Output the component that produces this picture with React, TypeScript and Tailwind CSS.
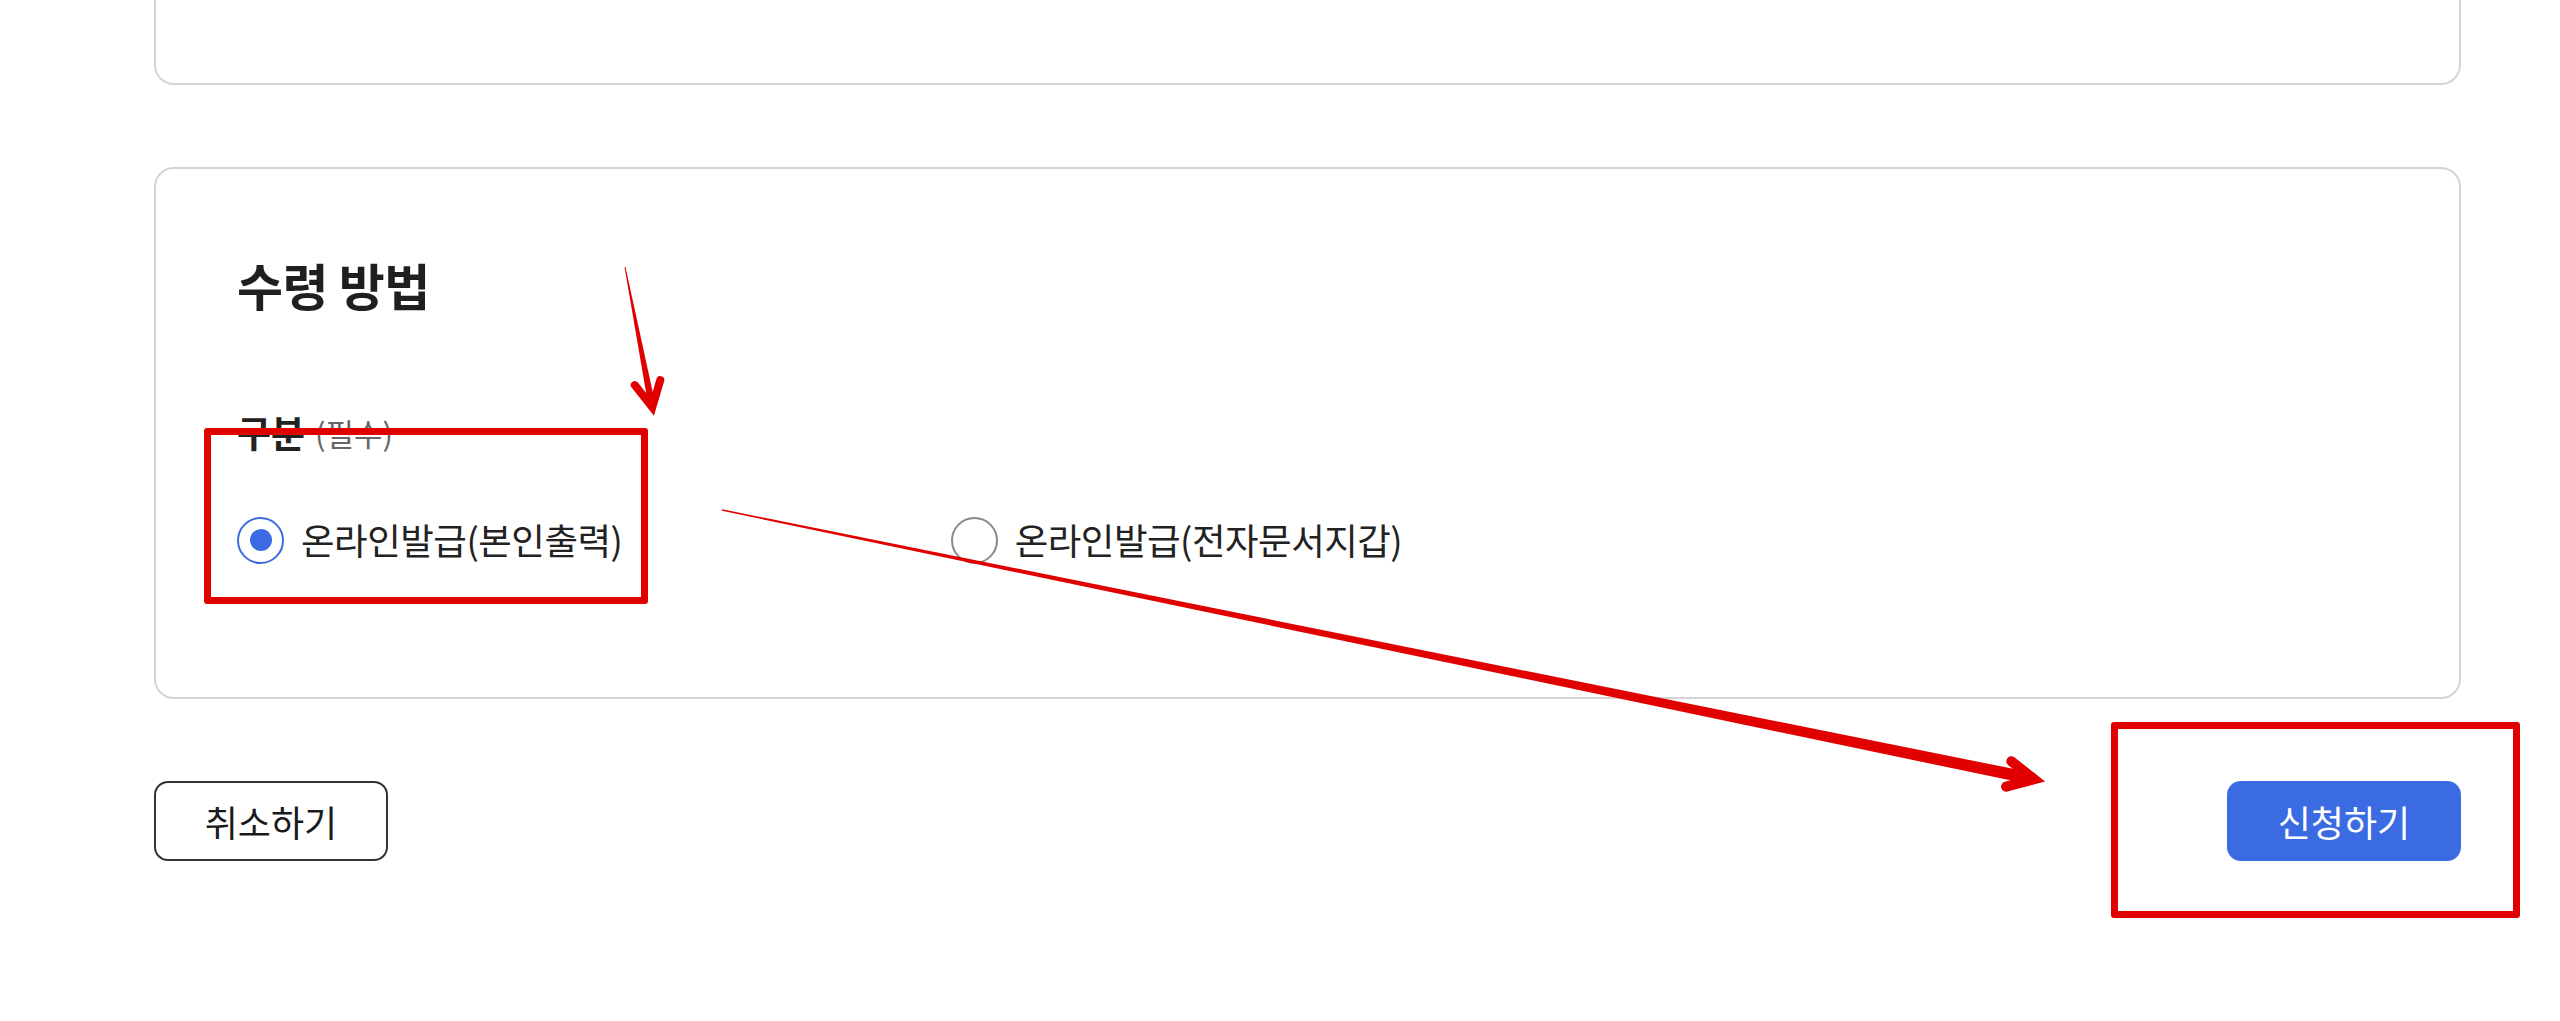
import React from "react";

const FONT = { fontFamily: '"Noto Sans CJK KR", "Noto Sans", sans-serif' };

function Arrow({
  x1,
  y1,
  x2,
  y2,
  w0,
  w1,
  head = 27,
  spread = 13,
  stroke = 9,
}: {
  x1: number;
  y1: number;
  x2: number;
  y2: number;
  w0: number;
  w1: number;
  head?: number;
  spread?: number;
  stroke?: number;
}) {
  const dx = x2 - x1;
  const dy = y2 - y1;
  const L = Math.sqrt(dx * dx + dy * dy);
  const deg = (Math.atan2(dy, dx) * 180) / Math.PI;
  const tip = L - 9;
  return (
    <g transform={`translate(${x1} ${y1}) rotate(${deg})`}>
      <polygon
        points={`0,${-w0 / 2} ${tip - 6},${-w1 / 2} ${tip - 6},${w1 / 2} 0,${w0 / 2}`}
        fill="#e00000"
      />
      <polyline
        points={`${tip - head},${-spread} ${tip},0 ${tip - head},${spread}`}
        fill="none"
        stroke="#e00000"
        strokeWidth={stroke}
        strokeLinecap="round"
        strokeLinejoin="miter"
      />
    </g>
  );
}

function Radio({ checked, label }: { checked: boolean; label: string }) {
  return (
    <label className="flex items-center gap-[17px] h-[48px]">
      {checked ? (
        <span className="flex items-center justify-center w-[47px] h-[47px] rounded-full border-2 border-[#3b6be3] bg-white">
          <span className="w-[22px] h-[22px] rounded-full bg-[#3b6be3]" />
        </span>
      ) : (
        <span className="w-[47px] h-[47px] rounded-full border-2 border-[#8a8a8a] bg-white" />
      )}
      <span className="text-[36.5px] leading-[48px] text-[#222222] tracking-[-0.5px]">{label}</span>
    </label>
  );
}

export default function App() {
  return (
    <div className="relative w-[2560px] h-[1021px] overflow-hidden bg-white" style={FONT}>
      <div className="ml-[154px] w-[2307px]">
        <div className="h-[85px] border-x-2 border-b-2 border-[#d4d4d4] rounded-b-[20px]" />

        <section className="mt-[82px] border-2 border-[#d4d4d4] rounded-[20px] pt-[84px] pb-[133px] px-[81px]">
          <h2 className="text-[50px] leading-[62px] font-bold text-[#1f1f1f] tracking-[-0.5px]">
            수령 방법
          </h2>
          <div className="mt-[94px] flex items-center gap-[10px] h-[48px]">
            <span className="text-[37px] font-bold text-[#222222]">구분</span>
            <span className="text-[31px] text-[#666666]">(필수)</span>
          </div>
          <div className="mt-[59px] grid grid-cols-3">
            <Radio checked label="온라인발급(본인출력)" />
            <Radio checked={false} label="온라인발급(전자문서지갑)" />
          </div>
        </section>

        <div className="mt-[82px] flex justify-between">
          <button className="w-[234px] h-[80px] rounded-[14px] border-2 border-[#333333] bg-white text-[36px] text-[#1a1a1a] flex items-center justify-center">
            취소하기
          </button>
          <button className="w-[234px] h-[80px] rounded-[14px] bg-[#3b6be3] text-[36px] text-white flex items-center justify-center">
            신청하기
          </button>
        </div>
      </div>

      <div className="absolute left-[204px] top-[428px] w-[444px] h-[176px] border-[7px] border-[#e00000] rounded-[3px] pointer-events-none" />
      <div className="absolute left-[2111px] top-[722px] w-[409px] h-[196px] border-[7px] border-[#e00000] rounded-[3px] pointer-events-none" />

      <svg className="absolute left-0 top-0 w-[2560px] h-[1021px] pointer-events-none" viewBox="0 0 2560 1021">
        <Arrow x1={625} y1={267} x2={654} y2={416} w0={1} w1={7} head={25} spread={13} stroke={8} />
        <Arrow x1={722} y1={510} x2={2043} y2={781} w0={1.5} w1={12} head={26} spread={13} stroke={10} />
      </svg>
    </div>
  );
}
